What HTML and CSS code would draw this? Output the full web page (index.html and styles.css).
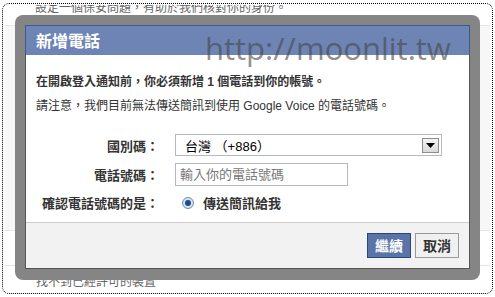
FILE: index.html
```html
<!DOCTYPE html>
<html lang="zh-Hant">
<head>
<meta charset="utf-8">
<title>新增電話</title>
<link rel="stylesheet" href="styles.css">
</head>
<body>
<div class="shot">
  <div class="page">
    <div class="page-top"><div class="page-top-clip"><span>設定一個保安問題，有助於我們核對你的身份。</span></div></div>
    <div class="page-mid"></div>
    <div class="page-row"></div>
    <div class="page-bottom"><span>找不到已經許可的裝置</span></div>
  </div>

  <div class="frame">
    <div class="dialog">
      <div class="dlg-head">新增電話</div>
      <div class="dlg-body">
        <p class="lead">在開啟登入通知前，你必須新增 1 個電話到你的帳號。</p>
        <p class="note">請注意，我們目前無法傳送簡訊到使用 Google Voice 的電話號碼。</p>
        <div class="form">
          <div class="label">國別碼：</div>
          <div class="select">
            <span class="select-text">台灣 （+886）</span>
            <span class="select-btn"><svg width="9" height="5" viewBox="0 0 9 5"><path d="M0 0H9L4.5 5Z" fill="#000"/></svg></span>
          </div>
          <div class="label">電話號碼：</div>
          <div class="input">輸入你的電話號碼</div>
          <div class="label">確認電話號碼的是：</div>
          <div class="radio-row">
            <span class="radio"><span class="radio-dot"></span></span>
            <span class="radio-text">傳送簡訊給我</span>
          </div>
        </div>
      </div>
      <div class="dlg-foot">
        <span class="btn btn-primary">繼續</span>
        <span class="btn btn-cancel">取消</span>
      </div>
    </div>
  </div>

  <div class="watermark">http://moonlit.tw</div>
  <div class="dotted"></div>
</div>
</body>
</html>
```

FILE: styles.css
```css
* { box-sizing: border-box; }
html, body { margin: 0; padding: 0; }
body {
  width: 495px;
  height: 297px;
  overflow: hidden;
  background: #fff;
  font-family: "Liberation Sans", "Noto Sans CJK TC", sans-serif;
  color: #333;
}
.shot {
  position: relative;
  width: 495px;
  height: 297px;
  overflow: hidden;
}

/* background page */
.page {
  display: flex;
  flex-direction: column;
  height: 297px;
}
.page-top {
  height: 14px;
  padding: 5px 0 0 35px;
}
.page-top-clip {
  height: 9px;
  overflow: hidden;
  font-size: 12px;
  color: #666;
}
.page-top-clip span { display: block; line-height: 12px; margin-top: -3px; }
.page-mid {
  margin: 11px 5px 0 5px;
  height: 205px;
  border-top: 1px solid #e5e5e5;
  background: #f7f7f7;
}
.page-row {
  margin: 0 5px;
  height: 36px;
  border-top: 1px solid #e5e5e5;
  border-bottom: 1px solid #e5e5e5;
}
.page-bottom {
  height: 12px;
  padding-left: 36px;
  overflow: hidden;
  font-size: 12px;
  color: #666;
  margin-top: 9px;
}
.page-bottom span { display: block; line-height: 14px; }

/* dialog frame */
.frame {
  position: absolute;
  left: 15px;
  top: 15px;
  width: 465px;
  height: 265px;
  background: #858585;
  border-radius: 8px;
  padding: 10px;
}
.dialog {
  display: flex;
  flex-direction: column;
  height: 244px;
  border: 1px solid #555;
  border-top: 0;
  background: #fff;
}
.dlg-head {
  height: 30px;
  background: #6d84b4;
  border: 1px solid #3b5998;
  border-bottom: 0;
  margin: 0 -1px;
  color: #fff;
  font-family: "Noto Sans CJK TC", sans-serif;
  font-weight: bold;
  font-size: 16px;
  line-height: 28px;
  padding-left: 10px;
}
.dlg-body {
  height: 168px;
  padding: 18px 10px 0 10px;
  border-bottom: 1px solid #ccc;
}
.lead {
  margin: 0;
  font-size: 12px;
  font-weight: bold;
  line-height: 18px;
  color: #333;
}
.note {
  margin: 6px 0 0 0;
  font-size: 12px;
  line-height: 18px;
  color: #333;
}
.form {
  display: grid;
  grid-template-columns: 123px auto;
  column-gap: 16px;
  row-gap: 7px;
  margin-top: 19px;
  align-items: center;
  justify-items: start;
}
.label {
  justify-self: end;
  font-weight: bold;
  font-size: 13px;
  color: #333;
}
.select {
  width: 267px;
  height: 22px;
  border: 1px solid #b5b8c0;
  display: flex;
  align-items: center;
  justify-content: space-between;
  padding: 0 2px 0 9px;
  font-size: 13px;
  color: #000;
}
.select-btn {
  width: 17px;
  height: 15px;
  border: 1px solid #8d8d8d;
  background: linear-gradient(#f4f4f4, #d9d9d9);
  display: flex;
  align-items: center;
  justify-content: center;
}
.input {
  width: 173px;
  height: 23px;
  border: 1px solid #b5b8c0;
  padding-left: 4px;
  font-size: 13px;
  line-height: 21px;
  color: #777;
}
.radio-row {
  display: flex;
  align-items: center;
  gap: 9px;
  padding-left: 7px;
}
.radio {
  width: 12px;
  height: 12px;
  border-radius: 50%;
  border: 1px solid #6f8fb5;
  background: radial-gradient(circle, #e8f0fa 0, #c7d7ea 100%);
  display: flex;
  align-items: center;
  justify-content: center;
}
.radio-dot {
  width: 6px;
  height: 6px;
  border-radius: 50%;
  background: #1e4a85;
}
.radio-text {
  font-weight: bold;
  font-size: 13px;
  color: #333;
}
.dlg-foot {
  flex: 1;
  background: #f2f2f2;
  display: flex;
  justify-content: flex-end;
  align-items: flex-start;
  gap: 4px;
  padding: 10px 10px 0 0;
}
.btn {
  width: 44px;
  height: 25px;
  font-family: "Noto Sans CJK TC", sans-serif;
  font-weight: bold;
  font-size: 14px;
  line-height: 23px;
  text-align: center;
}
.btn-primary {
  background: #5b74a8;
  border: 1px solid #29447e;
  color: #fff;
}
.btn-cancel {
  background: #f0f0f0;
  border: 1px solid #999;
  color: #333;
}

/* overlays */
.watermark {
  position: absolute;
  left: 205px;
  top: 28px;
  font-family: "Open Sans", sans-serif;
  font-size: 31px;
  line-height: 40px;
  color: rgba(70, 70, 70, 0.62);
  white-space: nowrap;
}
.dotted {
  position: absolute;
  left: 2px;
  top: 3px;
  right: 2px;
  bottom: 3px;
  border: 1px dotted #000;
  border-radius: 7px;
}
```
